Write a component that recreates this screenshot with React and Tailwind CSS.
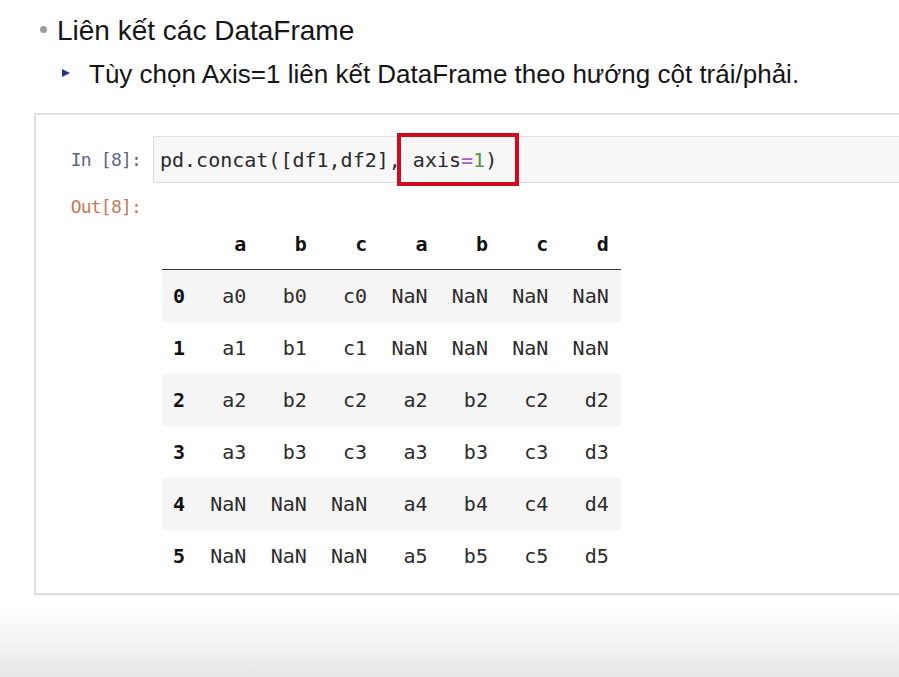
import React from "react";

const mono = { fontFamily: '"DejaVu Sans Mono", "Liberation Mono", monospace' };

const header = ["", "a", "b", "c", "a", "b", "c", "d"];
const rows = [
  ["0", "a0", "b0", "c0", "NaN", "NaN", "NaN", "NaN"],
  ["1", "a1", "b1", "c1", "NaN", "NaN", "NaN", "NaN"],
  ["2", "a2", "b2", "c2", "a2", "b2", "c2", "d2"],
  ["3", "a3", "b3", "c3", "a3", "b3", "c3", "d3"],
  ["4", "NaN", "NaN", "NaN", "a4", "b4", "c4", "d4"],
  ["5", "NaN", "NaN", "NaN", "a5", "b5", "c5", "d5"],
];

export default function App() {
  return (
    <div
      className="w-[899px] h-[677px] overflow-hidden bg-[linear-gradient(to_bottom,#ffffff_608px,#e7e7e7_677px)]"
      style={{ fontFamily: '"Liberation Sans", Arial, sans-serif' }}
    >
      {/* Bullet lines */}
      <div className="pt-[15px] pl-[40px] flex items-center h-[47px]">
        <span className="w-[7px] h-[7px] rounded-full bg-[#9a9a9a] mr-[10px] mt-[-4px]" />
        <span className="text-[28px] leading-[32px] text-[#151515]">Liên kết các DataFrame</span>
      </div>
      <div className="mt-[11px] pl-[62px] flex items-center h-[32px]">
        <svg width="8" height="8" viewBox="0 0 8 8" className="mr-[19px] mt-[-2px]">
          <polygon points="0,0 8,4 0,8" fill="#27348b" />
        </svg>
        <span className="text-[26px] leading-[32px] text-[#151515]">
          Tùy chọn Axis=1 liên kết DataFrame theo hướng cột trái/phải.
        </span>
      </div>

      {/* Notebook cell */}
      <div className="mt-[23px] ml-[34px] w-[900px] border-2 border-[#e0e0e0] pt-[21px] pb-[11px] bg-white shadow-[0_1px_2px_rgba(0,0,0,0.06)]">
        {/* Input row */}
        <div className="flex items-center">
          <div
            className="w-[117px] pr-[12px] text-right text-[18px] tracking-[-0.8px] text-[#5d6388]"
            style={mono}
          >
            In&nbsp;[8]:
          </div>
          <div className="relative flex-1 h-[47px] flex items-center pl-[6px] bg-[#f7f7f7] border border-[#dfdfdf] rounded-[2px]">
            <span className="text-[20px] text-[#2a2a2a] whitespace-pre" style={mono}>
              pd.concat([df1,df2], axis<span className="text-[#a95ec6]">=</span>
              <span className="text-[#4f9a3f]">1</span>)
            </span>
            <div className="absolute left-[243px] top-[-4px] w-[122px] h-[53px] border-[4px] border-[#cf0a1f]" />
          </div>
        </div>

        {/* Output row */}
        <div className="flex mt-[7px]">
          <div
            className="w-[117px] pr-[12px] text-right text-[18px] leading-[34px] tracking-[-0.8px] text-[#c47a58] self-start"
            style={mono}
          >
            Out[8]:
          </div>
          <div className="pl-[9px] pt-[28px]">
            <div className="text-[20px] text-[#2b2b2b]" style={mono}>
              <div className="grid grid-cols-[36px_repeat(7,60.4px)] h-[52px] items-center border-b border-[#3a3a3a] font-bold text-[#111]">
                {header.map((h, i) => (
                  <div key={i} className={i === 0 ? "pr-[13px] text-right" : "pr-[12px] text-right"}>
                    {h}
                  </div>
                ))}
              </div>
              {rows.map((r, ri) => (
                <div
                  key={ri}
                  className={
                    "grid grid-cols-[36px_repeat(7,60.4px)] h-[52px] items-center " +
                    (ri % 2 === 0 ? "bg-[#f5f5f5]" : "bg-white")
                  }
                >
                  {r.map((c, ci) => (
                    <div
                      key={ci}
                      className={
                        ci === 0
                          ? "pr-[13px] text-right font-bold text-[#111]"
                          : "pr-[12px] text-right"
                      }
                    >
                      {c}
                    </div>
                  ))}
                </div>
              ))}
            </div>
          </div>
        </div>
      </div>
    </div>
  );
}
